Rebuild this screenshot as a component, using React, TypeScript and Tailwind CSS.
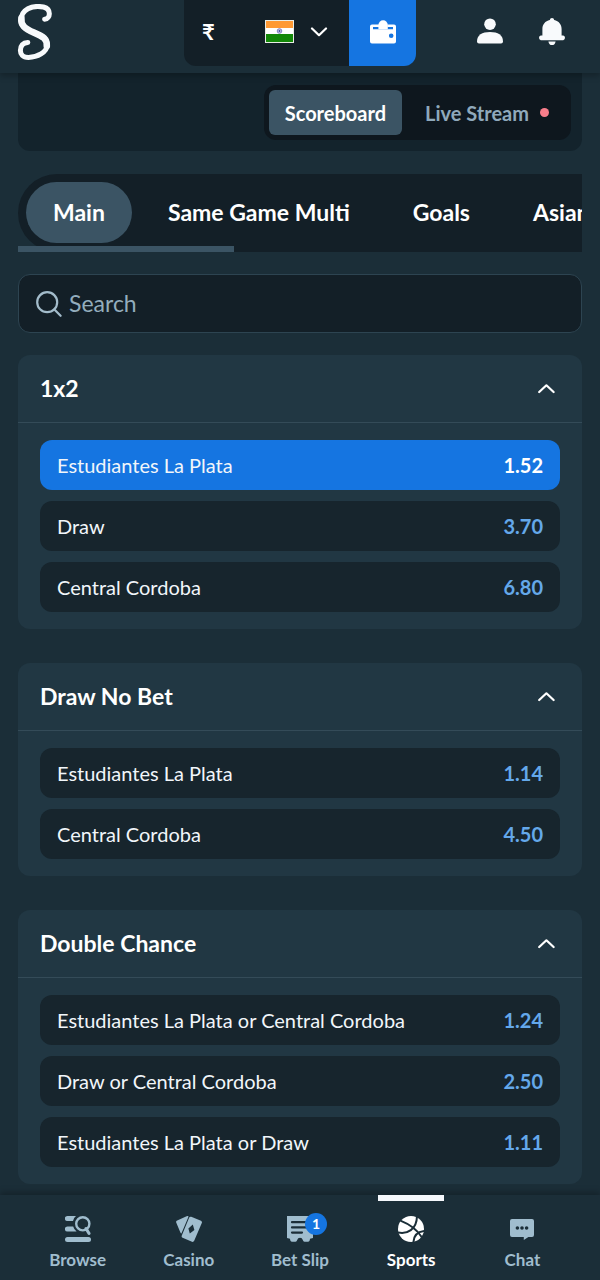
import { useState } from "react";
import type { ReactNode } from "react";
import clsx from "clsx";

const tabs = ["Main", "Same Game Multi", "Goals", "Asian Lines"];

const markets = [
  {
    title: "1x2",
    outcomes: [
      { name: "Estudiantes La Plata", odds: "1.52" },
      { name: "Draw", odds: "3.70" },
      { name: "Central Cordoba", odds: "6.80" },
    ],
  },
  {
    title: "Draw No Bet",
    outcomes: [
      { name: "Estudiantes La Plata", odds: "1.14" },
      { name: "Central Cordoba", odds: "4.50" },
    ],
  },
  {
    title: "Double Chance",
    outcomes: [
      { name: "Estudiantes La Plata or Central Cordoba", odds: "1.24" },
      { name: "Draw or Central Cordoba", odds: "2.50" },
      { name: "Estudiantes La Plata or Draw", odds: "1.11" },
    ],
  },
];

function Logo() {
  return (
    <svg width="36" height="58" viewBox="0 0 36 58" fill="none" stroke="#f8fafc" strokeLinecap="round">
      <path
        d="M27.6 15.2C33.6 14.8 34.6 5 26.5 3C15 0.8 4 5.5 4 16.5C4 22 8 24.8 17 28.6C26.5 32.6 30.2 34.5 30.2 40.6C30.2 48.5 20 53.4 11.5 53.4C5.5 53.4 3.4 49.8 3.4 46.4C3.4 41.6 6 38.6 10.8 38.4"
        strokeWidth="5"
      />
      <path d="M4.4 14C3.6 21 7.5 24.6 17 28.6C26.5 32.6 30.2 35 29.8 42" strokeWidth="6.6" />
    </svg>
  );
}

function Flag() {
  return (
    <svg width="29" height="23" viewBox="0 0 29 23">
      <rect width="29" height="23" fill="#e9ece6" />
      <rect x="1" y="1" width="27" height="7" fill="#ff9933" />
      <rect x="1" y="8" width="27" height="6" fill="#fff" />
      <rect x="1" y="14" width="27" height="8" fill="#138808" />
      <circle cx="14.5" cy="11" r="2.3" fill="#c9c8e8" stroke="#6a68b4" strokeWidth="0.8" />
      <circle cx="14.5" cy="11" r="0.9" fill="#4a48a0" />
    </svg>
  );
}

function Chevron({ up = false }: { up?: boolean }) {
  return (
    <svg
      width="18"
      height="10"
      viewBox="0 0 18 10"
      fill="none"
      stroke="#fff"
      strokeWidth="2.2"
      strokeLinecap="round"
      strokeLinejoin="round"
    >
      <path d={up ? "M2.2 8L9.4 1.3L16.6 8" : "M2 1.5L9 8.2L16 1.5"} />
    </svg>
  );
}

function WalletIcon() {
  return (
    <svg width="26" height="24" viewBox="0 0 26 24" fill="#fff">
      <path
        fillRule="evenodd"
        d="M2 4.6H9V7H3V9.2H23V7H17.4V4.6H24Q26 4.6 26 6.6V21.6Q26 23.6 24 23.6H2Q0 23.6 0 21.6V6.6Q0 4.6 2 4.6ZM21.2 13.4A2.3 2.3 0 1 0 21.2 18A2.3 2.3 0 1 0 21.2 13.4Z"
      />
      <path d="M8.4 9.2V5A4.7 4.7 0 0 1 17.8 5V9.2Z" />
    </svg>
  );
}

function UserIcon() {
  return (
    <svg width="26" height="26" viewBox="0 0 26 26" fill="#f8fafc">
      <circle cx="13" cy="6.2" r="5.8" />
      <path d="M0 23.5C0 17 5 14 13 14S26 17 26 23.5Q26 25.6 24 25.6H2Q0 25.6 0 23.5Z" />
    </svg>
  );
}

function BellIcon() {
  return (
    <svg width="26" height="27" viewBox="0 0 26 27" fill="#f8fafc">
      <path d="M13 0Q15 0 15.2 2C19.8 3 22.6 6.4 22.6 11V17.4H24.2Q26 17.8 26 19.8T24.2 22.2H1.8Q0 21.8 0 19.8T1.8 17.4H3.4V11C3.4 6.4 6.2 3 10.8 2Q11 0 13 0Z" />
      <path d="M9.4 23.4H16.6Q16 27 13 27T9.4 23.4Z" />
    </svg>
  );
}

function BrowseIcon() {
  return (
    <svg width="26" height="26" viewBox="0 0 26 26" fill="currentColor">
      <path d="M2.4 0H11Q8.4 2 8 5H2.4A2.5 2.5 0 0 1 2.4 0ZM2.4 10.5H8.2Q9 13.6 11.6 15.5H2.4A2.5 2.5 0 0 1 2.4 10.5Z" />
      <rect y="21" width="26" height="5" rx="2.5" />
      <circle cx="17.8" cy="7.8" r="6.6" fill="none" stroke="currentColor" strokeWidth="2.4" />
      <path d="M21 12.5L24 17.4" stroke="currentColor" strokeWidth="3" strokeLinecap="round" />
    </svg>
  );
}

function CasinoIcon() {
  return (
    <svg width="26" height="26" viewBox="0 0 26 26" fill="currentColor">
      <path d="M1.2 4.4L10.6 0.2Q12 -0.3 12.6 0.4L5.4 17.6Q4.8 17.2 4.4 16.4L0.2 6.4Q-0.2 5 1.2 4.4Z" />
      <path
        fillRule="evenodd"
        d="M15.2 0.8L25 4.8Q26.4 5.6 25.8 7L18.2 24.8Q17.4 26.4 16 25.8L6.6 21.8Q5.2 21 5.8 19.6L13.2 1.6Q13.8 0.4 15.2 0.8ZM16.8 8.6L12.4 12.4L13.8 17.6L18.4 14Z"
      />
    </svg>
  );
}

function BetSlipIcon() {
  return (
    <svg width="26" height="26" viewBox="0 0 26 26">
      <path
        fill="currentColor"
        d="M0 0H26V22L23 22.8Q22.8 25.8 21 25.8H17.5Q16.2 25.8 15.8 24A2.9 2.9 0 0 0 10.2 24Q9.8 25.8 8.5 25.8H5Q3.2 25.8 3 22.8L0 22Z"
      />
      <path d="M5 6.2H19M5 11.4H21M5 16.6H15" stroke="#1b2e38" strokeWidth="2.2" strokeLinecap="round" />
    </svg>
  );
}

function SportsIcon() {
  return (
    <svg width="26" height="26" viewBox="0 0 26 26">
      <circle cx="13" cy="13" r="13" fill="#fff" />
      <g fill="none" stroke="#1b2e38" strokeWidth="2">
        <path d="M2.4 4.6C11 8 18.5 12.5 23.6 21" />
        <path d="M-0.4 16.4C9 18.5 19 14 19 -0.6" />
        <path d="M15.4 27C15.4 20.5 19 15.5 27 14.8" />
      </g>
    </svg>
  );
}

function ChatIcon() {
  return (
    <svg width="24" height="21" viewBox="0 0 24 21">
      <path fill="currentColor" d="M2 0H22Q24 0 24 2V16Q24 18 22 18H18.4L13.8 21V18H2Q0 18 0 16V2Q0 0 2 0Z" />
      <g fill="#1b2e38">
        <circle cx="7.4" cy="9" r="1.8" />
        <circle cx="12" cy="9" r="1.8" />
        <circle cx="16.6" cy="9" r="1.8" />
      </g>
    </svg>
  );
}

const navItems: { label: string; icon: ReactNode; badge?: number }[] = [
  { label: "Browse", icon: <BrowseIcon /> },
  { label: "Casino", icon: <CasinoIcon /> },
  { label: "Bet Slip", icon: <BetSlipIcon />, badge: 1 },
  { label: "Sports", icon: <SportsIcon /> },
  { label: "Chat", icon: <ChatIcon /> },
];

function Header() {
  return (
    <header className="relative z-10 grid h-[73px] grid-cols-[1fr_auto_1fr] items-start bg-[#1b2e38] px-[17px] shadow-[0_3px_6px_rgba(0,0,0,0.25)]">
      <a href="#" aria-label="Home" className="mt-1">
        <Logo />
      </a>
      <div className="flex h-[66px] overflow-hidden rounded-b-xl">
        <button aria-label="Currency" className="flex w-[165px] items-center bg-[#131f27] pb-[3px] pl-[18px] pr-[21px]">
          <span className="text-[22px] font-bold text-white">₹</span>
          <span className="ml-auto mr-4">
            <Flag />
          </span>
          <Chevron />
        </button>
        <button aria-label="Wallet" className="flex w-[67px] items-center justify-center bg-[#1575e1] pb-[3px]">
          <WalletIcon />
        </button>
      </div>
      <div className="flex h-[62px] items-center justify-end gap-9 pr-[18px]">
        <button aria-label="Account">
          <UserIcon />
        </button>
        <button aria-label="Notifications">
          <BellIcon />
        </button>
      </div>
    </header>
  );
}

function Market({
  title,
  outcomes,
  picked,
  onPick,
}: {
  title: string;
  outcomes: { name: string; odds: string }[];
  picked: string;
  onPick: (key: string) => void;
}) {
  const [open, setOpen] = useState(true);

  return (
    <section className="overflow-hidden rounded-xl bg-[#213743]">
      <button
        onClick={() => setOpen(!open)}
        aria-expanded={open}
        className="flex h-[68px] w-full items-center justify-between border-b border-[#344b58] pl-[22px] pr-[27px]"
      >
        <span className="text-[23px] font-bold text-white">{title}</span>
        <Chevron up={open} />
      </button>
      {open && (
        <div className="flex flex-col gap-[11px] px-[22px] py-[17px]">
          {outcomes.map((o) => {
            const key = `${title}-${o.name}`;
            const active = picked === key;
            return (
              <button
                key={key}
                onClick={() => onPick(key)}
                className={clsx(
                  "flex h-[50px] items-center justify-between rounded-xl px-[17px]",
                  active ? "bg-[#1575e1]" : "bg-[#17252d]",
                )}
              >
                <span className="text-[20px] text-[#f1f6fa]">{o.name}</span>
                <span className={clsx("text-[20px] font-bold", active ? "text-white" : "text-[#64a8ea]")}>
                  {o.odds}
                </span>
              </button>
            );
          })}
        </div>
      )}
    </section>
  );
}

export default function App() {
  const [view, setView] = useState("Scoreboard");
  const [tab, setTab] = useState("Main");
  const [page, setPage] = useState("Sports");
  const [picked, setPicked] = useState("1x2-Estudiantes La Plata");

  return (
    <div className="flex min-h-screen flex-col bg-[#1b2e38] font-['Lato','Noto_Sans',sans-serif]">
      <Header />

      <main className="flex flex-1 flex-col px-[18px] pb-[11px]">
        {/* Scoreboard / stream switch */}
        <div className="flex justify-end rounded-b-xl bg-[#13232c] px-[11px] pb-[11px] pt-3">
          <div className="flex rounded-xl bg-[#0e171e] p-[5px]">
            {["Scoreboard", "Live Stream"].map((v) => (
              <button
                key={v}
                onClick={() => setView(v)}
                className={clsx(
                  "flex h-[45px] items-center gap-[11px] rounded-md text-[20px] font-bold",
                  view === v ? "bg-[#3b5464] px-4 text-white" : "pl-[23px] pr-[17px] text-[#8fa9bb]",
                )}
              >
                {v}
                {v === "Live Stream" && <span className="size-[9px] rounded-full bg-[#f77e8b]" />}
              </button>
            ))}
          </div>
        </div>

        {/* Market tabs */}
        <div className="relative mt-[23px] overflow-hidden">
          <div className="flex h-[78px] gap-[9px] overflow-hidden rounded-l-full bg-[#131f27] pb-[9px] pl-2 pt-2">
            {tabs.map((t) => (
              <button
                key={t}
                onClick={() => setTab(t)}
                className={clsx(
                  "shrink-0 rounded-full px-[27px] text-[23px] font-bold text-white",
                  tab === t && "bg-[#3b5464]",
                )}
              >
                {t}
              </button>
            ))}
          </div>
          <div className="absolute bottom-0 left-0 h-[6px] w-[216px] bg-[#3b5464]" />
        </div>

        <label className="mt-[22px] flex h-[59px] items-center gap-[7px] rounded-xl border border-[#2d4451] bg-[#131f27] px-[17px]">
          <svg width="26" height="26" viewBox="0 0 26 26" fill="none" stroke="#a3bccb" strokeWidth="2.2">
            <circle cx="11.2" cy="11.2" r="10" />
            <path d="M18.4 18.4L24.6 24.8" strokeLinecap="round" />
          </svg>
          <input
            type="text"
            aria-label="Search"
            placeholder="Search"
            className="min-w-0 flex-1 bg-transparent text-[23px] text-white outline-none placeholder:text-[#93adbd]"
          />
        </label>

        <div className="mt-[22px] flex flex-col gap-[34px]">
          {markets.map((m) => (
            <Market key={m.title} {...m} picked={picked} onPick={setPicked} />
          ))}
        </div>
      </main>

      <nav className="grid h-[85px] grid-cols-5 bg-[#1b2e38] px-[22px] shadow-[0_-3px_6px_rgba(0,0,0,0.25)]">
        {navItems.map(({ label, icon, badge }) => {
          const active = page === label;
          return (
            <button
              key={label}
              onClick={() => setPage(label)}
              className={clsx("flex flex-col items-center", active ? "text-white" : "text-[#a0bdce]")}
            >
              <span className={clsx("h-[6px] w-[66px]", active && "bg-[#f5f8fc]")} />
              <span className="relative mt-[15px] flex h-[26px] items-center">
                {icon}
                {badge && (
                  <span className="absolute -right-[14px] -top-[3px] flex size-[22px] items-center justify-center rounded-full bg-[#1575e1] text-sm font-bold text-white">
                    {badge}
                  </span>
                )}
              </span>
              <span className="mt-[6px] text-[17px] leading-6 font-bold">{label}</span>
            </button>
          );
        })}
      </nav>
    </div>
  );
}
